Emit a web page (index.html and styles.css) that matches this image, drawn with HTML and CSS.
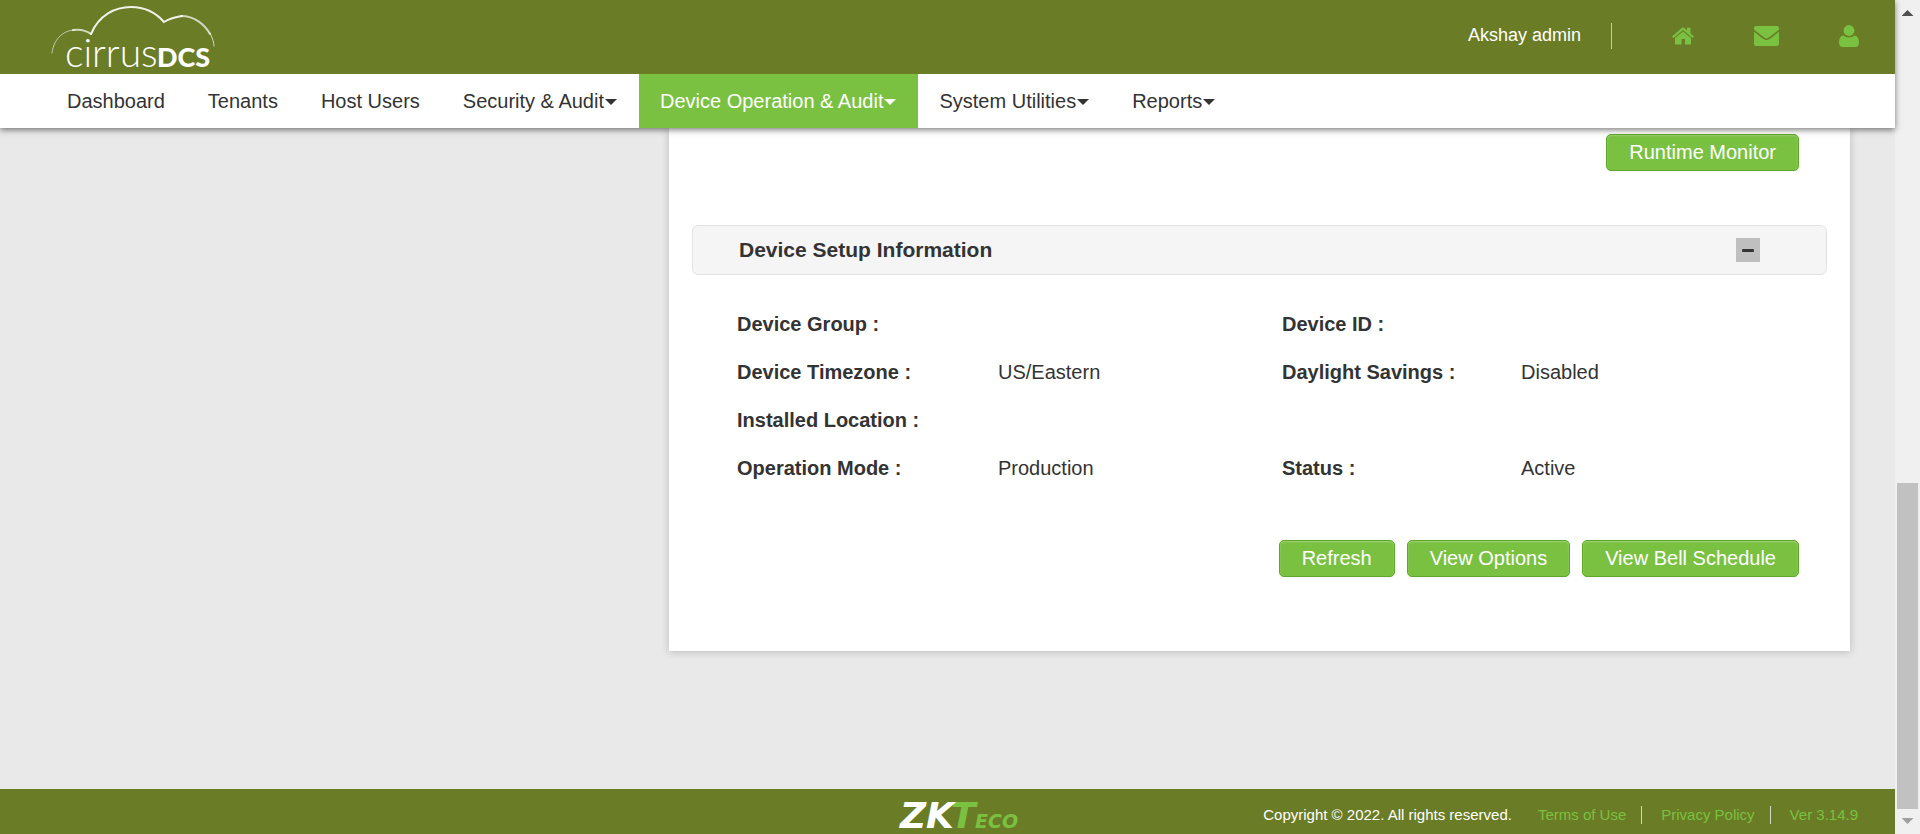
FILE: index.html
```html
<!DOCTYPE html>
<html lang="en">
<head>
<meta charset="utf-8">
<title>cirrusDCS - Device Details</title>
<link rel="stylesheet" href="styles.css">
</head>
<body>
<div class="page">
  <header class="header">
    <div class="topbar">
      <a class="logo" href="#" aria-label="cirrusDCS">
        <svg width="168" height="76" viewBox="0 0 168 76">
          <g fill="none" stroke="#fff" stroke-linecap="round">
            <path stroke-width="1" opacity=".6" d="M2 53C4 37 15 30 25 30"/>
            <path stroke-width="2" opacity=".7" d="M23 30C30 29 37 31 41 34"/>
            <path stroke-width="2" opacity=".9" d="M41 34C49 15 65 7 81 7C96 7 107 14 114 22C119 19 125 17 132 16"/>
            <path stroke-width="2" opacity=".7" d="M131 16C145 16 155 25 160 34"/>
            <path stroke-width="1" opacity=".7" d="M160 33C163 39 164 43 164 46"/>
          </g>
          <text class="logo-light" x="15" y="67">cirrus</text>
          <text class="logo-bold" x="107" y="67">DCS</text>
        </svg>
      </a>
      <div class="account">
        <span class="user-name">Akshay admin</span>
        <a class="icon-link icon-home" href="#" aria-label="Home">
          <svg width="22" height="18" viewBox="0 0 22 18" fill="#7ac142">
            <path d="M11 0L15 3.4V.8H18.500V6.500L22 9.500L20.500 11L11 3L1.500 11L0 9.500Z"/>
            <path d="M11 4.400L19 11V17.500H13V12H9.500V17.500H3V11Z"/>
          </svg>
        </a>
        <a class="icon-link" href="#" aria-label="Messages">
          <svg width="25" height="20" viewBox="0 0 25 20" fill="#7ac142">
            <path d="M2 0H23Q25 0 25 2V3.500C21 7 17 10 14 12Q12.500 13 11 12C8 10 4 7 0 3.500V2Q0 0 2 0Z"/>
            <path d="M0 5.500C4 9 7 11.500 10.500 13.500Q12.500 14.500 14.500 13.500C18 11.500 21 9 25 5.500V17.500Q25 20 22.500 20H2.500Q0 20 0 17.500Z"/>
          </svg>
        </a>
        <a class="icon-link" href="#" aria-label="Profile">
          <svg width="20" height="22" viewBox="0 0 20 22" fill="#7ac142">
            <circle cx="10" cy="5.500" r="5.400"/>
            <path d="M4.500 10.500C7.500 13 12.500 13 15.500 10.500C18.500 10.500 20 14 20 17.500Q20 22 16 22H4Q0 22 0 17.500C0 14 1.500 10.500 4.500 10.500Z"/>
          </svg>
        </a>
      </div>
    </div>
    <nav class="nav">
      <a class="nav-item" href="#">Dashboard</a>
      <a class="nav-item" href="#">Tenants</a>
      <a class="nav-item" href="#">Host Users</a>
      <a class="nav-item" href="#">Security &amp; Audit<span class="caret"></span></a>
      <a class="nav-item active" href="#">Device Operation &amp; Audit<span class="caret"></span></a>
      <a class="nav-item" href="#">System Utilities<span class="caret"></span></a>
      <a class="nav-item" href="#">Reports<span class="caret"></span></a>
    </nav>
  </header>

  <main class="main">
    <section class="panel">
      <div class="actions">
        <button class="btn" type="button">Runtime Monitor</button>
      </div>
      <div class="section-head">
        <h2 class="section-title">Device Setup Information</h2>
        <button class="toggle" type="button" aria-label="Collapse"><span class="minus"></span></button>
      </div>
      <dl class="details">
        <dt>Device Group :</dt><dd></dd>
        <dt>Device ID :</dt><dd></dd>
        <dt>Device Timezone :</dt><dd>US/Eastern</dd>
        <dt>Daylight Savings :</dt><dd>Disabled</dd>
        <dt class="row-start">Installed Location :</dt><dd></dd>
        <dt class="row-start">Operation Mode :</dt><dd>Production</dd>
        <dt>Status :</dt><dd>Active</dd>
      </dl>
      <div class="actions">
        <button class="btn" type="button">Refresh</button>
        <button class="btn" type="button">View Options</button>
        <button class="btn" type="button">View Bell Schedule</button>
      </div>
    </section>
  </main>

  <footer class="footer">
    <svg class="brand" width="124" height="45" viewBox="0 0 124 45" role="img" aria-label="ZKTeco">
      <text class="brand-large" fill="#7ac142" x="53" y="39">T</text>
      <text class="brand-large" fill="#fff" x="2" y="39">ZK</text>
      <text class="brand-small" fill="#7ac142" x="77" y="39">ECO</text>
    </svg>
    <div class="legal">
      <span class="copyright">Copyright © 2022. All rights reserved.</span>
      <a class="legal-link" href="#">Terms of Use</a>
      <a class="legal-link" href="#">Privacy Policy</a>
      <span class="legal-link">Ver 3.14.9</span>
    </div>
  </footer>
</div>
<div class="scrollbar" aria-hidden="true">
  <span class="arrow arrow-up"></span>
  <div class="track"><div class="thumb"></div></div>
  <span class="arrow arrow-down"></span>
</div>
</body>
</html>
```
FILE: styles.css
```css
* { box-sizing: border-box; }

body {
  margin: 0;
  min-height: 100vh;
  display: grid;
  grid-template-columns: 1fr 25px;
  background: #e9e9e9;
  color: #333;
  font: 20px/24px "Liberation Sans", Arial, sans-serif;
}

a { color: inherit; text-decoration: none; }

.page { display: flex; flex-direction: column; min-width: 0; }

/* Header */
.header {
  position: relative;
  z-index: 1;
  box-shadow: 0 2px 6px rgba(0, 0, 0, .5);
}
.topbar {
  display: flex;
  justify-content: space-between;
  height: 74px;
  padding: 0 36px 0 50px;
  background: #6a7c25;
}
.logo svg { display: block; }
.logo-light { font: 300 39px "Lato", sans-serif; fill: #fff; }
.logo-bold { font: 900 27px "Lato", sans-serif; fill: #fff; }
.account { display: flex; align-items: center; height: 72px; gap: 60px; }
.user-name {
  padding: 0 30px 2px 0;
  border-right: 1px solid #c8cda8;
  color: #fff;
  font-size: 18px;
}
.icon-link svg { display: block; }

/* Navigation */
.nav { display: flex; height: 54px; padding-left: 46px; background: #fff; }
.nav-item { display: flex; align-items: center; padding: 0 22px 0 21px; }
.nav-item.active { background: #7ac142; color: #fff; }
.caret {
  margin: 2px 0 0 1px;
  border: 6px solid transparent;
  border-top-color: currentColor;
  border-bottom: 0;
}

/* Panel */
.main { flex: 1; padding: 0 45px 138px 669px; }
.panel {
  padding: 6px 23px 74px;
  background: #fff;
  box-shadow: 0 1px 8px rgba(0, 0, 0, .2);
}
.actions { display: flex; justify-content: flex-end; gap: 12px; padding-right: 28px; }
.btn {
  height: 37px;
  padding: 0 22px 1px;
  border: 1px solid #5fa827;
  border-radius: 5px;
  background: #7ac142;
  box-shadow: inset 0 1px 2px rgba(255, 255, 255, .3), 0 1px 2px rgba(0, 0, 0, .05);
  color: #fff;
  font: inherit;
}
.section-head {
  display: flex;
  align-items: center;
  justify-content: space-between;
  height: 50px;
  margin-top: 54px;
  padding: 0 66px 0 46px;
  border: 1px solid #e3e3e3;
  border-radius: 6px;
  background: #f5f5f5;
}
.section-title { margin: 0; font-size: 21px; }
.toggle {
  display: grid;
  place-items: center;
  width: 24px;
  height: 24px;
  padding: 0;
  border: 0;
  background: #bfbfbf;
}
.minus { width: 12px; height: 3px; border-radius: 1px; background: #333; }
.details {
  display: grid;
  grid-template-columns: 261fr 284fr 239fr 306fr;
  grid-auto-rows: 48px;
  align-items: center;
  margin: 25px 0 48px;
  padding-left: 45px;
}
.details dt { font-weight: bold; }
.details dd { margin: 0; }
.row-start { grid-column-start: 1; }

/* Footer */
.footer {
  display: grid;
  grid-template-columns: 1fr auto 1fr;
  align-items: center;
  height: 45px;
  padding: 0 37px 0 62px;
  background: #6a7c25;
  color: #7ac142;
  font-size: 15px;
  line-height: 18px;
}
.brand { grid-column: 2; }
.brand-large { font: italic bold 36px "DejaVu Sans", Verdana, sans-serif; }
.brand-small { font: italic bold 19px "DejaVu Sans", Verdana, sans-serif; }
.legal { display: flex; justify-content: flex-end; padding-top: 6px; white-space: nowrap; }
.copyright { margin-right: 26px; color: #fff; }
.legal-link + .legal-link { margin-left: 15px; padding-left: 19px; border-left: 1px solid #d5d9bd; }

/* Scrollbar */
.scrollbar { display: flex; flex-direction: column; background: #f0f0f0; }
.arrow { width: 12px; height: 25px; margin: 0 auto; background: #505050; }
.arrow-up { clip-path: polygon(0 16px, 50% 10px, 100% 16px); }
.arrow-down { background: #a0a0a0; clip-path: polygon(0 9px, 50% 15px, 100% 9px); }
.track { flex: 1; display: flex; flex-direction: column; justify-content: flex-end; padding: 0 2px; }
.thumb { height: 41.600%; background: #c1c1c1; }
```
